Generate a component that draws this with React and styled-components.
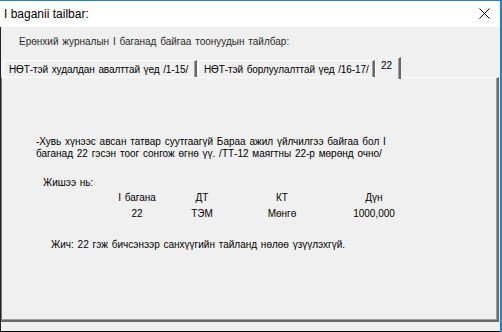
import React from "react";
import styled, { createGlobalStyle } from "styled-components";

const GlobalStyle = createGlobalStyle`
  html, body {
    margin: 0;
    padding: 0;
    background: #f0f0f0;
  }
  * {
    box-sizing: border-box;
  }
`;

const columns = [
  { head: "I багана", value: "22" },
  { head: "ДТ", value: "ТЭМ" },
  { head: "КТ", value: "Мөнгө" },
  { head: "Дүн", value: "1000,000" },
];

const tabs = [
  { label: "НӨТ-тэй худалдан авалттай үед /1-15/", width: 194 },
  { label: "НӨТ-тэй борлуулалттай үед /16-17/", width: 177 },
  { label: "22", width: 26, active: true },
];

function App() {
  return (
    <Window>
      <GlobalStyle />
      <TitleBar>
        <Title>I baganii tailbar:</Title>
        <CloseButton>
          <svg width="11" height="11" viewBox="0 0 11 11">
            <path d="M0.5 0.5 L10.5 10.5 M10.5 0.5 L0.5 10.5" stroke="#000" strokeWidth="1" />
          </svg>
        </CloseButton>
      </TitleBar>
      <Body>
        <Caption>Ерөнхий журналын I баганад байгаа тоонуудын тайлбар:</Caption>
        <TabStrip>
          {tabs.map((t) => (
            <Tab key={t.label} $active={t.active} style={{ width: t.width }}>
              {t.label}
            </Tab>
          ))}
        </TabStrip>
        <Panel>
          <Paragraph>
            -Хувь хүнээс авсан татвар суутгаагүй Бараа ажил үйлчилгээ байгаа бол I
            <br />
            баганад 22 гэсэн тоог сонгож өгнө үү. /ТТ-12 маягтны 22-р мөрөнд очно/
          </Paragraph>
          <Example>Жишээ нь:</Example>
          <Grid>
            {columns.map((c) => (
              <Cell key={c.head}>{c.head}</Cell>
            ))}
            {columns.map((c) => (
              <Cell key={c.value}>{c.value}</Cell>
            ))}
          </Grid>
          <Note>Жич: 22 гэж бичсэнээр санхүүгийн тайланд нөлөө үзүүлэхгүй.</Note>
        </Panel>
      </Body>
    </Window>
  );
}

const Window = styled.div`
  width: 502px;
  height: 332px;
  display: flex;
  flex-direction: column;
  border-top: 1px solid #1a7fd4;
  border-right: 2px solid #1883d7;
  background: #f0f0f0;
  font-family: "Liberation Sans", Arial, sans-serif;
  font-size: 10px;
  word-spacing: 1px;
  color: #000;
`;

const TitleBar = styled.div`
  height: 26px;
  flex-shrink: 0;
  background: #fff;
  display: flex;
  align-items: center;
  justify-content: space-between;
  padding: 0 10px 0 4px;
`;

const Title = styled.div`
  font-family: "Liberation Sans", Arial, sans-serif;
  font-size: 12px;
  word-spacing: 0;
  color: #000;
  margin-top: -1px;
`;

const CloseButton = styled.div`
  width: 11px;
  height: 11px;
  display: flex;
  margin-top: -2px;
  svg {
    display: block;
  }
`;

const Body = styled.div`
  flex: 1;
  display: flex;
  flex-direction: column;
  border-left: 1px solid #222;
  border-bottom: 1px solid #000;
  padding-bottom: 9px;
`;

const Caption = styled.div`
  height: 32px;
  flex-shrink: 0;
  padding: 8px 0 0 18px;
  line-height: 13px;
  color: #2a2a2a;
`;

const TabStrip = styled.div`
  height: 18px;
  flex-shrink: 0;
  display: flex;
  align-items: flex-end;
  padding-left: 1px;
  position: relative;
  z-index: 1;
`;

const Tab = styled.div`
  height: ${(p) => (p.$active ? "22px" : "17px")};
  margin-bottom: ${(p) => (p.$active ? "-2px" : "0")};
  margin-left: ${(p) => (p.$active ? "0" : "1px")};
  background: #f0f0f0;
  border-top: 1px solid #fff;
  border-left: 1px solid #fff;
  border-right: 2px solid #696969;
  box-shadow: inset -1px 0 0 #a0a0a0;
  padding: ${(p) => (p.$active ? "1px 0 0 5px" : "2px 0 0 5px")};
  line-height: 13px;
  letter-spacing: -0.1px;
  white-space: nowrap;
`;

const Panel = styled.div`
  flex: 1;
  margin-right: 1px;
  border-top: 1px solid #fff;
  border-left: 1px solid #7a7a7a;
  border-right: 2px solid #696969;
  border-bottom: 2px solid #696969;
  box-shadow: inset -1px -1px 0 #a0a0a0;
  line-height: 13px;
`;

const Paragraph = styled.div`
  margin: 58px 0 0 34px;
  line-height: 12px;
`;

const Example = styled.div`
  margin: 16px 0 0 41px;
`;

const Grid = styled.div`
  display: grid;
  grid-template-columns: 60px 70px 90px 94px;
  row-gap: 3px;
  margin: 2px 0 0 105px;
`;

const Cell = styled.div`
  text-align: center;
`;

const Note = styled.div`
  margin: 18px 0 0 49px;
`;

export default App;
